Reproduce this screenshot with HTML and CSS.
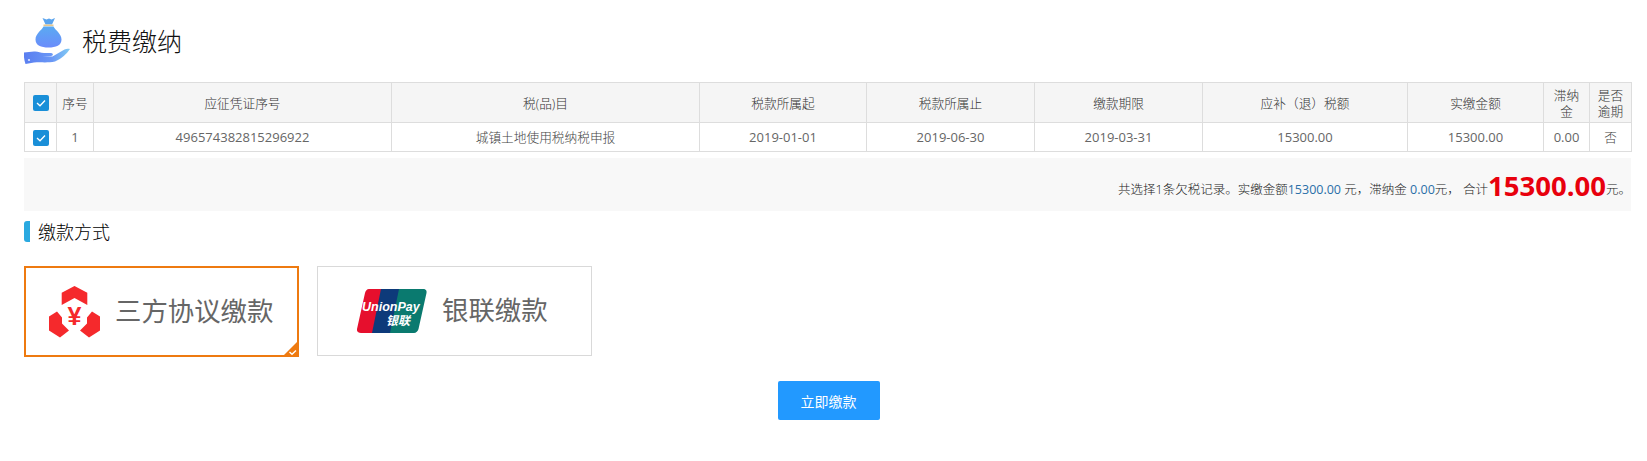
FILE: index.html
```html
<!DOCTYPE html>
<html lang="zh-CN">
<head>
<meta charset="utf-8">
<title>税费缴纳</title>
<link rel="stylesheet" href="styles.css">
</head>
<body>
<main class="page">
  <header class="page-title">
    <svg class="title-icon" viewBox="0 0 46 46" width="46" height="46" aria-hidden="true">
      <defs>
        <linearGradient id="bag" x1="0" y1="0" x2="0" y2="1"><stop offset="0" stop-color="#5aaaf2"/><stop offset="1" stop-color="#6b8cfb"/></linearGradient>
        <linearGradient id="hand" x1="0" y1="0" x2="1" y2="0"><stop offset="0" stop-color="#5a7ef0"/><stop offset=".6" stop-color="#6a97f6"/><stop offset="1" stop-color="#82ccf3"/></linearGradient>
      </defs>
      <path d="M18.500 0l4 1.500 2.500-1 2.500 1 3.500-1.500-3 6.500h-6.500z" fill="#5aa4ee"/>
      <rect x="19.500" y="6.500" width="10" height="1.700" fill="#e6c88e"/>
      <path d="M19.500 8.500h10c1.500 3.500 8 7 8 13 0 6-5.500 8-13 8s-13-2-13-8c0-6 6.500-9.500 8-13z" fill="url(#bag)"/>
      <path d="M0 34.500l10-1c4-.5 6 1.500 10 1.500h7c2.500 0 2.500 3 0 3h-8.500l10 .5 12-7c2-1 4-1 5.500-.5-3.500 5-8 9.500-15 12.500-7 1.500-13 .5-21 1l-8.500 1.500c-1.500-4-1.800-8-1.500-11.500z" fill="url(#hand)"/>
      <circle cx="5" cy="42" r="1.100" fill="#dfe8ff"/>
    </svg>
    <h1 class="title-text">税费缴纳</h1>
  </header>

  <table class="tax-table">
    <colgroup>
      <col class="c-check"><col class="c-no"><col class="c-cert"><col class="c-item">
      <col class="c-date1"><col class="c-date2"><col class="c-date3"><col class="c-due">
      <col class="c-paid"><col class="c-late"><col class="c-over">
    </colgroup>
    <thead>
      <tr>
        <th><span class="check"><svg viewBox="0 0 16 16" width="16" height="16"><path d="M4 8l3 2.800 5-5.300" fill="none" stroke="#fff" stroke-width="1.300"/></svg></span></th>
        <th>序号</th><th>应征凭证序号</th><th>税(品)目</th><th>税款所属起</th><th>税款所属止</th><th>缴款期限</th><th>应补<span class="tc">（退）</span>税额</th><th>实缴金额</th><th>滞纳金</th><th>是否逾期</th>
      </tr>
    </thead>
    <tbody>
      <tr>
        <td><span class="check"><svg viewBox="0 0 16 16" width="16" height="16"><path d="M4 8l3 2.800 5-5.300" fill="none" stroke="#fff" stroke-width="1.300"/></svg></span></td>
        <td>1</td><td>496574382815296922</td><td class="cell-cjk">城镇土地使用税纳税申报</td><td>2019-01-01</td><td>2019-06-30</td><td>2019-03-31</td><td>15300.00</td><td>15300.00</td><td>0.00</td><td class="cell-cjk">否</td>
      </tr>
    </tbody>
  </table>

  <div class="summary">共选择1条欠税记录。实缴金额<span class="blue">15300.00</span> 元<span class="tc">，</span>滞纳金 <span class="blue">0.00</span>元<span class="tc">，</span> 合计<strong class="total">15300.00</strong>元。</div>

  <h2 class="section-title">缴款方式</h2>

  <div class="methods">
    <div class="method selected">
      <svg class="logo-tri" viewBox="0 0 52 52" width="52" height="52" aria-hidden="true">
        <path d="M12.700 6.700l12.800-6.700 12.800 6.700v12.300l-12.800-7-12.800 7z" fill="#f5292c"/>
        <path d="M0 30.500l8-5 5 6v6l7 7-9 7-11-7z" fill="#f5292c"/>
        <path d="M51 30.500l-8-5-5 6v6l-7 7 9 7 11-7z" fill="#f5292c"/>
        <text class="yen" x="25.500" y="39">¥</text>
      </svg>
      <span class="method-text">三方协议缴款</span>
      <span class="corner"><svg viewBox="0 0 17 17" width="17" height="17"><path d="M17 0v17h-17z" fill="#ee7a10"/><path d="M7.500 12l2.500 2.200 4-3.700" fill="none" stroke="#fff" stroke-width="1.400"/></svg></span>
    </div>
    <div class="method">
      <svg class="logo-up" viewBox="0 0 70 44" width="70" height="44" aria-hidden="true">
        <path d="M12 0h18l-9 44h-17c-3 0-4.500-2-4-4l8-36c.5-2 2-4 4-4z" fill="#e60f2d"/>
        <path d="M24 0h24l-9 44h-24z" fill="#0d3a7a"/>
        <path d="M42 0h24c3 0 4 2 3.500 4l-8 36c-.5 2-2.500 4-4.500 4h-24z" fill="#0a7a6f"/>
        <text class="up-en" x="5" y="22">UnionPay</text>
        <text class="up-cn" x="29" y="36">银联</text>
      </svg>
      <span class="method-text">银联缴款</span>
    </div>
  </div>

  <div class="actions"><button class="pay-btn" type="button">立即缴款</button></div>
</main>
</body>
</html>
```

FILE: styles.css
```css
* { box-sizing: border-box; }
html, body { margin: 0; padding: 0; background: #fff; }
body {
  font-family: "Open Sans", "Noto Sans CJK SC", sans-serif;
  color: #333;
  font-size: 13px;
}
.page { width: 1647px; height: 461px; padding: 18px 16px 0 24px; overflow: hidden; }
.tc { font-family: "Noto Sans CJK TC", sans-serif; }

.page-title { display: flex; align-items: center; gap: 12px; height: 46px; margin-bottom: 18px; }
.title-icon { display: block; flex: none; }
.title-text { margin: 0; font-size: 25px; font-weight: 300; line-height: 44px; color: #111; }

.tax-table { border-collapse: collapse; table-layout: fixed; width: 1607px; }
.c-check { width: 32px; } .c-no { width: 37px; } .c-cert { width: 298px; } .c-item { width: 308px; }
.c-date1 { width: 167px; } .c-date2 { width: 168px; } .c-date3 { width: 168px; } .c-due { width: 205px; }
.c-paid { width: 136px; } .c-late { width: 46px; } .c-over { width: 42px; }
.tax-table th, .tax-table td {
  border: 1px solid #ddd; padding: 0 5px; text-align: center; vertical-align: middle;
  font-size: 13px; line-height: 16px;
}
.tax-table th { background: #f5f5f5; height: 40px; color: #333; font-weight: 300; font-size: 12.7px; }
.tax-table td { height: 29px; color: #666; font-weight: 400; }
.tax-table td.cell-cjk { font-size: 12.7px; font-weight: 300; color: #444; }
.check { display: block; width: 16px; height: 16px; margin: 1px auto 0; background: #1a8fd8; border-radius: 2px; }
.check svg { display: block; }

.summary {
  margin-top: 6px; height: 53px; background: #f8f8f8; text-align: right; padding-right: 0;
  font-size: 12.5px; line-height: 61px; color: #222; white-space: nowrap; font-weight: 300;
}
.blue { color: #2a6fa8; font-weight: 400; }
.total { font-size: 27.5px; font-weight: 700; color: #e8000d; vertical-align: -2px; line-height: 20px; }

.section-title {
  margin: 10px 0 0; height: 21px; border-left: 6px solid #2aa9e0; border-radius: 3px 0 0 3px;
  padding-left: 8px; font-size: 18px; font-weight: 300; line-height: 23px; color: #000;
}
.methods { display: flex; align-items: flex-start; gap: 18px; margin-top: 24px; }
.method {
  position: relative; display: flex; align-items: center; width: 275px; height: 90px;
  border: 1px solid #d9d9d9; padding-left: 39px; gap: 15px;
}
.method.selected { height: 91px; border: 2px solid #ee7a10; padding-left: 23px; gap: 14px; }
.logo-tri, .logo-up { display: block; flex: none; }
.method-text { font-size: 26.4px; font-weight: 400; color: #666; line-height: 36px; white-space: nowrap; margin-bottom: 2px; }
.corner { position: absolute; right: -2px; bottom: -2px; width: 17px; height: 17px; }
.corner svg { display: block; }
.yen { font: 700 25px "Liberation Sans", sans-serif; fill: #f5292c; text-anchor: middle; }
.up-en { font: italic 700 12.5px "Liberation Sans", sans-serif; fill: #fff; }
.up-cn { font: italic 700 12px "Noto Sans CJK SC", sans-serif; fill: #fff; }

.actions { display: flex; justify-content: center; margin-top: 24px; padding-left: 2px; }
.pay-btn {
  width: 102px; height: 39px; border: 0; border-radius: 2px; background: #2299ff; color: #fff;
  font-family: inherit; font-size: 14px; padding: 0;
}
```
